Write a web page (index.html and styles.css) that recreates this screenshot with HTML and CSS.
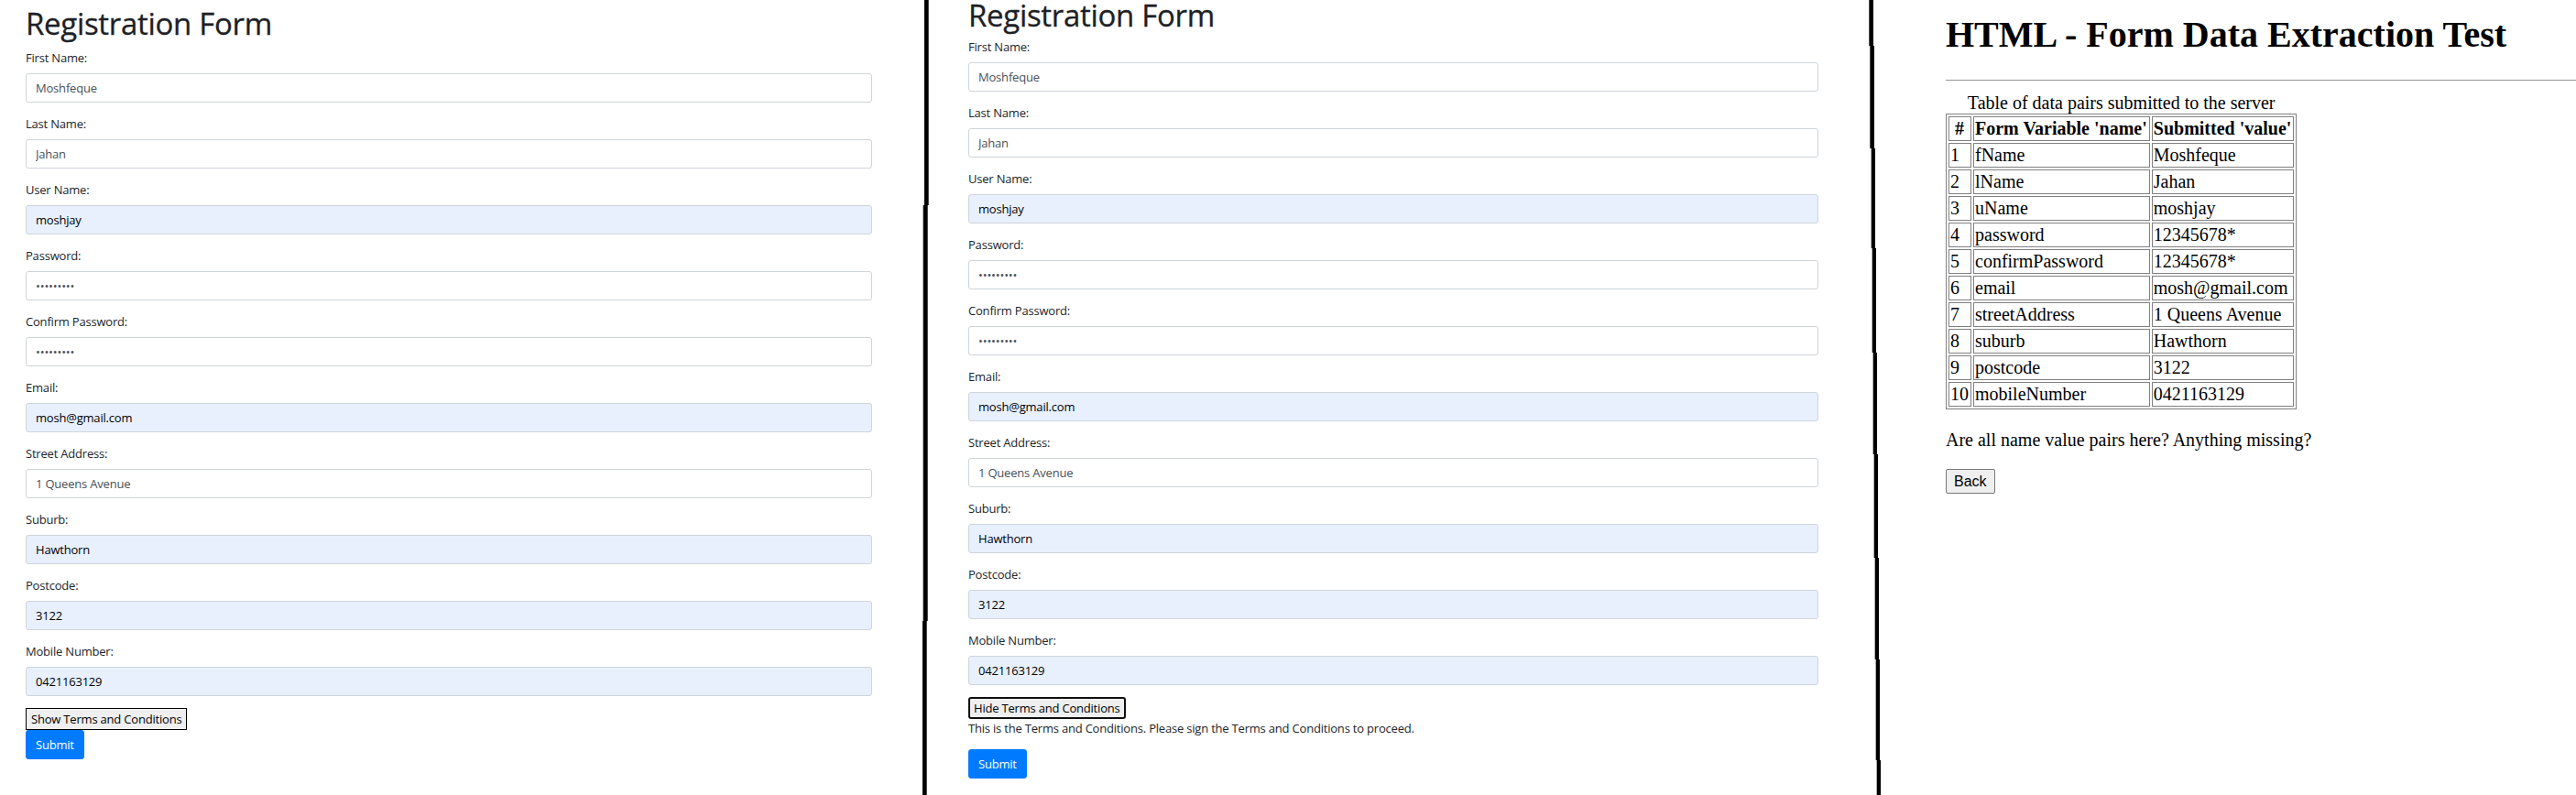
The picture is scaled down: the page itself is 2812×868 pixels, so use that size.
FILE: index.html
```html
<!DOCTYPE html>
<html lang="en">
<head>
<meta charset="utf-8">
<title>Registration Form collage</title>
<link rel="stylesheet" href="styles.css">
</head>
<body>
<div class="collage">
  <section class="panel panel-form p1">
    <h1 class="form-title">Registration Form</h1>
    <div class="form-group"><label class="lbl">First Name:</label><input class="field" type="text" value="Moshfeque"></div>
    <div class="form-group"><label class="lbl">Last Name:</label><input class="field" type="text" value="Jahan"></div>
    <div class="form-group"><label class="lbl">User Name:</label><input class="field autofill" type="text" value="moshjay"></div>
    <div class="form-group"><label class="lbl">Password:</label><input class="field" type="password" value="12345678*"></div>
    <div class="form-group"><label class="lbl">Confirm Password:</label><input class="field" type="password" value="12345678*"></div>
    <div class="form-group"><label class="lbl">Email:</label><input class="field autofill" type="text" value="mosh@gmail.com"></div>
    <div class="form-group"><label class="lbl">Street Address:</label><input class="field" type="text" value="1 Queens Avenue"></div>
    <div class="form-group"><label class="lbl">Suburb:</label><input class="field autofill" type="text" value="Hawthorn"></div>
    <div class="form-group"><label class="lbl">Postcode:</label><input class="field autofill" type="text" value="3122"></div>
    <div class="form-group"><label class="lbl">Mobile Number:</label><input class="field autofill" type="text" value="0421163129"></div>
    <button class="terms-btn" type="button">Show Terms and Conditions</button>
    <button class="submit-btn" type="button">Submit</button>
  </section>

  <svg class="sep sep1" width="7" height="868" viewBox="0 0 7 868" aria-hidden="true">
    <path d="M2 0 H6.7 V224 H5.7 V678 H4.7 V868 H0 V678 H0.7 V224 H2 Z" fill="#000"/>
  </svg>

  <section class="panel panel-form p2">
    <h1 class="form-title">Registration Form</h1>
    <div class="form-group"><label class="lbl">First Name:</label><input class="field" type="text" value="Moshfeque"></div>
    <div class="form-group"><label class="lbl">Last Name:</label><input class="field" type="text" value="Jahan"></div>
    <div class="form-group"><label class="lbl">User Name:</label><input class="field autofill" type="text" value="moshjay"></div>
    <div class="form-group"><label class="lbl">Password:</label><input class="field" type="password" value="12345678*"></div>
    <div class="form-group"><label class="lbl">Confirm Password:</label><input class="field" type="password" value="12345678*"></div>
    <div class="form-group"><label class="lbl">Email:</label><input class="field autofill" type="text" value="mosh@gmail.com"></div>
    <div class="form-group"><label class="lbl">Street Address:</label><input class="field" type="text" value="1 Queens Avenue"></div>
    <div class="form-group"><label class="lbl">Suburb:</label><input class="field autofill" type="text" value="Hawthorn"></div>
    <div class="form-group"><label class="lbl">Postcode:</label><input class="field autofill" type="text" value="3122"></div>
    <div class="form-group"><label class="lbl">Mobile Number:</label><input class="field autofill" type="text" value="0421163129"></div>
    <button class="terms-btn focused" type="button">Hide Terms and Conditions</button>
    <p class="terms-text">This is the Terms and Conditions. Please sign the Terms and Conditions to proceed.</p>
    <button class="submit-btn" type="button">Submit</button>
  </section>

  <svg class="sep sep2" width="14" height="868" viewBox="0 0 14 868" aria-hidden="true">
    <path d="M0.3 0 H5 V50 H6 V162 H7 V271 H8 V385 H9 V496 H10 V609 H11 V720 H12 V830 H13 V868 H8.7 V830 H7.7 V720 H6.7 V609 H5.7 V496 H4.7 V385 H3.7 V271 H2.7 V162 H1.3 V50 H0.3 Z" fill="#000"/>
  </svg>

  <section class="panel panel-result">
    <h1 class="result-title">HTML - Form Data Extraction Test</h1>
    <hr class="rule">
    <table class="pairs">
      <caption>Table of data pairs submitted to the server</caption>
      <thead>
        <tr><th>#</th><th>Form Variable 'name'</th><th>Submitted 'value'</th></tr>
      </thead>
      <tbody>
        <tr><td>1</td><td>fName</td><td>Moshfeque</td></tr>
        <tr><td>2</td><td>lName</td><td>Jahan</td></tr>
        <tr><td>3</td><td>uName</td><td>moshjay</td></tr>
        <tr><td>4</td><td>password</td><td>12345678*</td></tr>
        <tr><td>5</td><td>confirmPassword</td><td>12345678*</td></tr>
        <tr><td>6</td><td>email</td><td>mosh@gmail.com</td></tr>
        <tr><td>7</td><td>streetAddress</td><td>1 Queens Avenue</td></tr>
        <tr><td>8</td><td>suburb</td><td>Hawthorn</td></tr>
        <tr><td>9</td><td>postcode</td><td>3122</td></tr>
        <tr><td>10</td><td>mobileNumber</td><td>0421163129</td></tr>
      </tbody>
    </table>
    <p class="question">Are all name value pairs here? Anything missing?</p>
    <button class="back-btn" type="button">Back</button>
  </section>
</div>
</body>
</html>
```

FILE: styles.css
```css
* { box-sizing: border-box; }

html, body {
  margin: 0;
  padding: 0;
  background: #fff;
}

.collage {
  display: flex;
  width: 2812px;
  height: 868px;
  overflow: hidden;
}

.panel {
  flex: none;
  height: 868px;
}

.sep { flex: none; display: block; }

/* ---------- Bootstrap-like form panels ---------- */
.panel-form {
  font-family: "Segoe UI", "Open Sans", "Noto Sans", sans-serif;
  color: #212529;
  display: flex;
  flex-direction: column;
  align-items: flex-start;
}

.p1 {
  width: 1007px;
  padding: 6px 0 0 28px;
}

.p2 {
  width: 1026px;
  padding: 0 0 0 43px;
}

.p2 .form-title {
  margin-top: -3px;
  margin-bottom: 4px;
}

.form-title {
  margin: 0 0 7px;
  font-size: 33px;
  line-height: 40px;
  font-weight: 500;
  letter-spacing: -0.3px;
  color: #1d2125;
  -webkit-text-stroke: 0.3px #1d2125;
}

.form-group {
  display: flex;
  flex-direction: column;
  align-items: stretch;
  margin-bottom: 13px;
}

.p1 .form-group { width: 924px; }
.p2 .form-group { width: 928px; }

.lbl {
  font-size: 13px;
  line-height: 20px;
  margin-bottom: 7px;
  letter-spacing: -0.2px;
}

.field {
  height: 32px;
  padding: 0 10px;
  border: 1px solid #ced4da;
  border-radius: 3px;
  background: #fff;
  color: #495057;
  font-family: inherit;
  font-size: 13px;
  letter-spacing: -0.2px;
  outline: none;
}

.field.autofill {
  background: #e8f0fe;
  color: #000;
}

.terms-btn {
  height: 24px;
  padding: 0 5px;
  border: 1px solid #000;
  border-radius: 0;
  background: #efefef;
  color: #000;
  font-family: inherit;
  font-size: 13px;
  letter-spacing: -0.2px;
  line-height: 20px;
}

.terms-btn.focused {
  border: 2px solid #101010;
  border-radius: 3px;
  padding: 0 4px;
}

.terms-text {
  margin: 0 0 13px;
  font-size: 13px;
  line-height: 20px;
  letter-spacing: -0.2px;
}

.submit-btn {
  height: 32px;
  padding: 0 10px;
  border: 1px solid #007bff;
  border-radius: 3px;
  background: #007bff;
  color: #fff;
  font-family: inherit;
  font-size: 13px;
  letter-spacing: -0.2px;
}

/* ---------- Plain HTML result panel ---------- */
.panel-result {
  width: 759px;
  padding: 0 0 0 70px;
  font-family: "Liberation Serif", "Times New Roman", serif;
  font-size: 20px;
  color: #000;
}

.result-title {
  margin: 16px 0 27px;
  font-size: 40px;
  font-weight: bold;
  line-height: 44px;
}

.rule {
  margin: 0 0 12px;
  width: 689px;
  height: 2px;
  border: none;
  border-top: 1px solid #9a9a9a;
  border-bottom: 1px solid #eeeeee;
}

.pairs {
  border: 1px solid #808080;
  border-spacing: 2px;
  font-size: 20px;
}

.pairs caption {
  line-height: 23px;
}

.pairs th,
.pairs td {
  border: 1px solid #808080;
  padding: 1px 2px 1px 1px;
  line-height: 23px;
  text-align: left;
  white-space: nowrap;
}

.pairs th { font-weight: bold; text-align: center; }

.question {
  margin: 22px 0 20px;
  line-height: 23px;
}

.back-btn {
  height: 27px;
  padding: 0 8px;
  border: 1px solid #767676;
  border-radius: 2px;
  background: #efefef;
  color: #000;
  font-family: "Liberation Sans", Arial, sans-serif;
  font-size: 16px;
}
```
